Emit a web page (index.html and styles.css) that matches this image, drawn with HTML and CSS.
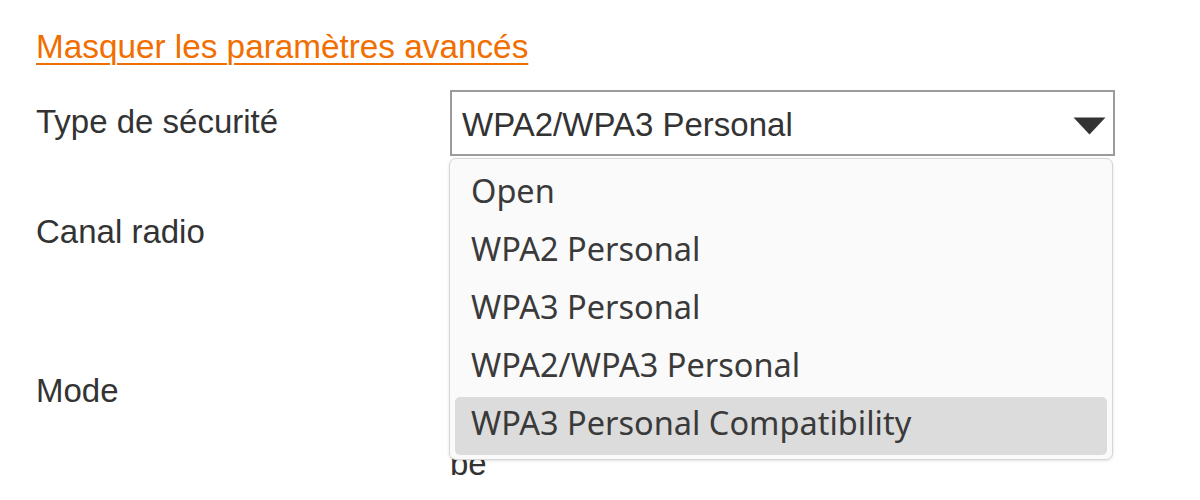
FILE: index.html
```html
<!DOCTYPE html>
<html lang="fr">
<head>
<meta charset="utf-8">
<title>Paramètres avancés</title>
<link rel="stylesheet" href="styles.css">
</head>
<body>
<div class="page">
  <a class="toggle-link" href="#">Masquer les paramètres avancés</a>
  <div class="form">
    <div class="row row-security">
      <div class="label">Type de sécurité</div>
      <div class="control">
        <div class="select">
          <span class="select-value">WPA2/WPA3 Personal</span>
          <svg class="select-arrow" width="33" height="18" viewBox="0 0 33 18"><polygon points="0.5,0.5 32.5,0.5 16.5,17.5" fill="#333"/></svg>
        </div>
        <ul class="popup">
          <li class="option">Open</li>
          <li class="option">WPA2 Personal</li>
          <li class="option">WPA3 Personal</li>
          <li class="option">WPA2/WPA3 Personal</li>
          <li class="option option-active">WPA3 Personal Compatibility</li>
        </ul>
      </div>
    </div>
    <div class="row row-channel">
      <div class="label">Canal radio</div>
      <div class="control"></div>
    </div>
    <div class="row row-mode">
      <div class="label">Mode</div>
      <div class="control">
        <p class="note">be</p>
      </div>
    </div>
  </div>
</div>
</body>
</html>
```

FILE: styles.css
```css
html, body {
  margin: 0;
  padding: 0;
  background: #ffffff;
}

.page {
  padding: 28px 0 0 36px;
  font-family: "Liberation Sans", Arial, sans-serif;
  font-size: 33px;
  line-height: 38px;
  color: #333333;
}

.toggle-link {
  display: inline-block;
  font-size: 33.3px;
  color: #f16e00;
  text-decoration: underline;
  text-decoration-thickness: 2px;
  text-underline-offset: 5px;
}

.form {
  margin-top: 24px;
  display: flex;
  flex-direction: column;
  gap: 48px;
}

.row {
  display: grid;
  grid-template-columns: 414px 665px;
}

.row-security {
  height: 66px;
}

.row-channel {
  height: 111px;
}

.label {
  padding-top: 9px;
}

.row-security .label {
  padding-top: 13px;
}

.control {
  position: relative;
}

.select {
  box-sizing: border-box;
  height: 66px;
  border: 2px solid #9b9b9b;
  background: #ffffff;
  display: flex;
  align-items: flex-start;
  justify-content: space-between;
  padding: 14px 7px 0 10px;
}

.select-arrow {
  margin-top: 11px;
  display: block;
}

.note {
  margin: 82px 0 0 0;
}

.popup {
  position: absolute;
  top: 68px;
  left: -1px;
  width: 664px;
  height: 302px;
  box-sizing: border-box;
  margin: 0;
  padding: 6px 5px 4px 5px;
  list-style: none;
  background: #fafafa;
  border: 1px solid #d6d6d6;
  border-radius: 7px;
  box-shadow: 0 1px 3px rgba(0, 0, 0, 0.12);
  font-family: "Noto Sans", "Open Sans", sans-serif;
  font-size: 32.5px;
  color: #3a3a3a;
  z-index: 2;
}

.option {
  height: 58px;
  box-sizing: border-box;
  line-height: 51px;
  padding: 0 0 7px 16px;
  border-radius: 5px;
  white-space: nowrap;
}

.option-active {
  background: #dcdcdc;
}
```
